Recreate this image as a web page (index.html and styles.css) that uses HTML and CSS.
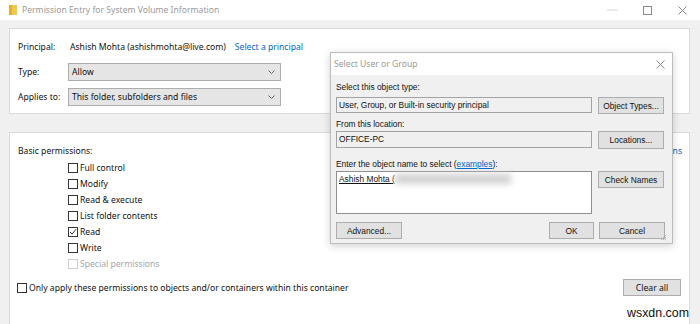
FILE: index.html
```html
<!DOCTYPE html>
<html lang="en">
<head>
    <meta charset="UTF-8">
    <title>Permission Entry for System Volume Information</title>
    <link rel="stylesheet" href="styles.css">
</head>
<body>
    <div class="window">
        <div class="titlebar">
            <svg class="folder-icon" width="8" height="10" viewBox="0 0 8 10">
                <rect x="0" y="0" width="8" height="10" fill="#f0c94f"/>
                <rect x="0" y="0" width="3" height="10" fill="#ddb038"/>
            </svg>
            <span class="title">Permission Entry for System Volume Information</span>
            <div class="controls">
                <span class="ctl"><svg width="11" height="2"><line x1="0" y1="1" x2="11" y2="1" stroke="#d4d4d4"/></svg></span>
                <span class="ctl"><svg width="9" height="9"><rect x="0.5" y="0.5" width="8" height="8" fill="none" stroke="#8a8a8a"/></svg></span>
                <span class="ctl"><svg width="9" height="9"><path d="M0.5 0.5 L8.5 8.5 M8.5 0.5 L0.5 8.5" stroke="#8a8a8a"/></svg></span>
            </div>
        </div>

        <div class="content">
            <section class="panel panel-top">
                <div class="field-row">
                    <span class="label">Principal:</span>
                    <span class="value">Ashish Mohta (ashishmohta@live.com)</span>
                    <a class="link">Select a principal</a>
                </div>
                <div class="field-row">
                    <span class="label">Type:</span>
                    <div class="select">
                        <span>Allow</span>
                        <svg class="chevron" width="7" height="4" viewBox="0 0 7 4"><path d="M0.5 0.5 L3.5 3.5 L6.5 0.5" fill="none" stroke="#666"/></svg>
                    </div>
                </div>
                <div class="field-row">
                    <span class="label">Applies to:</span>
                    <div class="select">
                        <span>This folder, subfolders and files</span>
                        <svg class="chevron" width="7" height="4" viewBox="0 0 7 4"><path d="M0.5 0.5 L3.5 3.5 L6.5 0.5" fill="none" stroke="#666"/></svg>
                    </div>
                </div>
            </section>

            <section class="panel panel-perms">
                <div class="perms-head">
                    <span>Basic permissions:</span>
                    <a class="link">Show advanced permissions</a>
                </div>
                <ul class="perm-list">
                    <li class="perm"><span class="box"></span>Full control</li>
                    <li class="perm"><span class="box"></span>Modify</li>
                    <li class="perm"><span class="box"></span>Read &amp; execute</li>
                    <li class="perm"><span class="box"></span>List folder contents</li>
                    <li class="perm"><span class="box checked"><svg width="8" height="8" viewBox="0 0 8 8"><path d="M1 4 L3 6.2 L7 1.2" fill="none" stroke="#333" stroke-width="1"/></svg></span>Read</li>
                    <li class="perm"><span class="box"></span>Write</li>
                    <li class="perm disabled"><span class="box"></span>Special permissions</li>
                </ul>
                <div class="perm-footer">
                    <label class="perm"><span class="box"></span>Only apply these permissions to objects and/or containers within this container</label>
                    <button class="btn clear-btn">Clear all</button>
                </div>
            </section>
        </div>

        <div class="dialog">
            <div class="dlg-title">
                <span>Select User or Group</span>
                <svg width="9" height="9"><path d="M0.5 0.5 L8.5 8.5 M8.5 0.5 L0.5 8.5" stroke="#8a8a8a"/></svg>
            </div>
            <div class="dlg-body">
                <div class="dlg-label">Select this object type:</div>
                <div class="dlg-row">
                    <div class="field">User, Group, or Built-in security principal</div>
                    <button class="btn dlg-btn">Object Types...</button>
                </div>
                <div class="dlg-label gap-small">From this location:</div>
                <div class="dlg-row row-tight">
                    <div class="field tall">OFFICE-PC</div>
                    <button class="btn dlg-btn tall">Locations...</button>
                </div>
                <div class="dlg-label gap-large">Enter the object name to select (<a class="ul-link">examples</a>):</div>
                <div class="dlg-row row-tight">
                    <div class="field names"><span class="resolved">Ashish Mohta (</span><span class="blurred"></span></div>
                    <button class="btn dlg-btn">Check Names</button>
                </div>
                <div class="dlg-row dlg-actions">
                    <button class="btn dlg-btn">Advanced...</button>
                    <span class="spacer"></span>
                    <button class="btn ok-btn">OK</button>
                    <button class="btn dlg-btn">Cancel</button>
                </div>
            </div>
            <svg class="grip" width="6" height="6" viewBox="0 0 6 6">
                <rect x="4" y="0" width="1" height="1" fill="#b5b5b5"/>
                <rect x="2" y="2" width="1" height="1" fill="#b5b5b5"/>
                <rect x="4" y="2" width="1" height="1" fill="#b5b5b5"/>
                <rect x="0" y="4" width="1" height="1" fill="#b5b5b5"/>
                <rect x="2" y="4" width="1" height="1" fill="#b5b5b5"/>
                <rect x="4" y="4" width="1" height="1" fill="#b5b5b5"/>
            </svg>
        </div>

        <div class="watermark">wsxdn.com</div>
    </div>
</body>
</html>
```

FILE: styles.css
```css
body {
    margin: 0;
    font-family: "Noto Sans", "Open Sans", sans-serif;
    font-size: 8.6px;
    color: #111;
}

.window {
    position: relative;
    width: 700px;
    height: 324px;
    background-color: #f0f0f0;
    overflow: hidden;
}

/* title bar */
.titlebar {
    height: 20px;
    background-color: #fff;
    display: flex;
    align-items: center;
    padding-left: 9px;
}

.folder-icon {
    flex: none;
}

.title {
    margin-left: 5px;
    color: #9a9a9a;
}

.controls {
    margin-left: auto;
    display: flex;
    align-items: center;
}

.ctl {
    width: 35px;
    height: 20px;
    display: flex;
    align-items: center;
    justify-content: center;
}

/* main content */
.content {
    padding: 8px 10px 0 9px;
}

.panel {
    background-color: #fff;
    border: 1px solid #dadada;
    box-sizing: border-box;
}

.panel-top {
    height: 86px;
    padding: 9px 8px 0;
    display: flex;
    flex-direction: column;
    gap: 7px;
}

.field-row {
    display: flex;
    align-items: center;
    height: 18px;
}

.label {
    width: 50px;
    flex: none;
}

.value {
    padding-left: 2px;
}

.link {
    color: #0066cc;
    margin-left: 9px;
}

.select {
    width: 213px;
    height: 18px;
    box-sizing: border-box;
    background-color: #e5e5e5;
    border: 1px solid #adadad;
    display: flex;
    align-items: center;
    justify-content: space-between;
    padding: 0 5px 0 3px;
}

.panel-perms {
    margin-top: 18px;
    height: 200px;
    padding: 10px 7px 0 8px;
}

.perms-head {
    display: flex;
    justify-content: space-between;
    height: 16px;
    line-height: 16px;
}

.perm-list {
    list-style: none;
    margin: 1px 0 0;
    padding: 0 0 0 50px;
}

.perm {
    display: flex;
    align-items: center;
    height: 16px;
}

.box {
    width: 10px;
    height: 10px;
    box-sizing: border-box;
    border: 1px solid #333;
    background-color: #fff;
    margin-right: 2px;
    display: flex;
    align-items: center;
    justify-content: center;
    flex: none;
}

.perm.disabled {
    color: #a6a6a6;
}

.perm.disabled .box {
    border-color: #cfcfcf;
}

.perm-footer {
    display: flex;
    align-items: center;
    justify-content: space-between;
    margin-top: 7px;
    margin-left: -1px;
}

.btn {
    background-color: #e1e1e1;
    border: 1px solid #adadad;
    box-sizing: border-box;
    font-family: inherit;
    font-size: inherit;
    color: #111;
    padding: 0;
}

.clear-btn {
    width: 58px;
    height: 17px;
    margin-right: 1px;
}

/* Select User or Group dialog */
.dialog {
    position: absolute;
    left: 330px;
    top: 52px;
    width: 343px;
    height: 192px;
    box-sizing: border-box;
    border: 1px solid #bdbdbd;
    background-color: #f0f0f0;
    box-shadow: 0 2px 8px rgba(0, 0, 0, 0.18);
    font-family: "Liberation Sans", Arial, sans-serif;
    font-size: 8.4px;
}

.dlg-title {
    height: 22px;
    background-color: #fff;
    display: flex;
    align-items: center;
    justify-content: space-between;
    padding: 0 7px 0 3px;
    color: #999;
    font-family: "Noto Sans", sans-serif;
    font-size: 8.6px;
}

.dlg-body {
    padding: 6px 7px 0 5px;
}

.dlg-label {
    height: 12px;
    line-height: 12px;
}

.dlg-label.gap-small {
    margin-top: 4px;
}

.dlg-label.gap-large {
    margin-top: 9px;
}

.dlg-row {
    display: flex;
    align-items: flex-start;
    gap: 6px;
    margin-top: 4px;
}

.dlg-row.row-tight {
    margin-top: 1px;
}

.field {
    width: 256px;
    height: 16px;
    box-sizing: border-box;
    border: 1px solid #a3a3a3;
    background-color: #f0f0f0;
    padding-left: 2px;
    line-height: 14px;
    flex: none;
}

.field.tall {
    height: 17px;
    line-height: 15px;
}

.field.names {
    height: 43px;
    background-color: #fff;
    border-color: #8f8f8f;
    display: flex;
    align-items: flex-start;
}

.resolved {
    text-decoration: underline;
}

.blurred {
    display: inline-block;
    width: 116px;
    height: 10px;
    margin-top: 2px;
    background-color: #d2d2d2;
    filter: blur(3px);
}

.ul-link {
    color: #0066cc;
    text-decoration: underline;
}

.dlg-btn {
    width: 66px;
    height: 17px;
    flex: none;
}

.dlg-btn.tall {
    height: 18px;
}

.dlg-actions {
    margin-top: 8px;
    gap: 5px;
}

.spacer {
    flex: 1;
}

.ok-btn {
    width: 45px;
    height: 17px;
}

.grip {
    position: absolute;
    right: 5px;
    bottom: 2px;
}

.watermark {
    position: absolute;
    right: 11px;
    bottom: 3px;
    padding-left: 3px;
    background-color: #fff;
    font-family: "Liberation Sans", Arial, sans-serif;
    font-size: 12.4px;
    line-height: 15px;
    color: #111;
}
```
